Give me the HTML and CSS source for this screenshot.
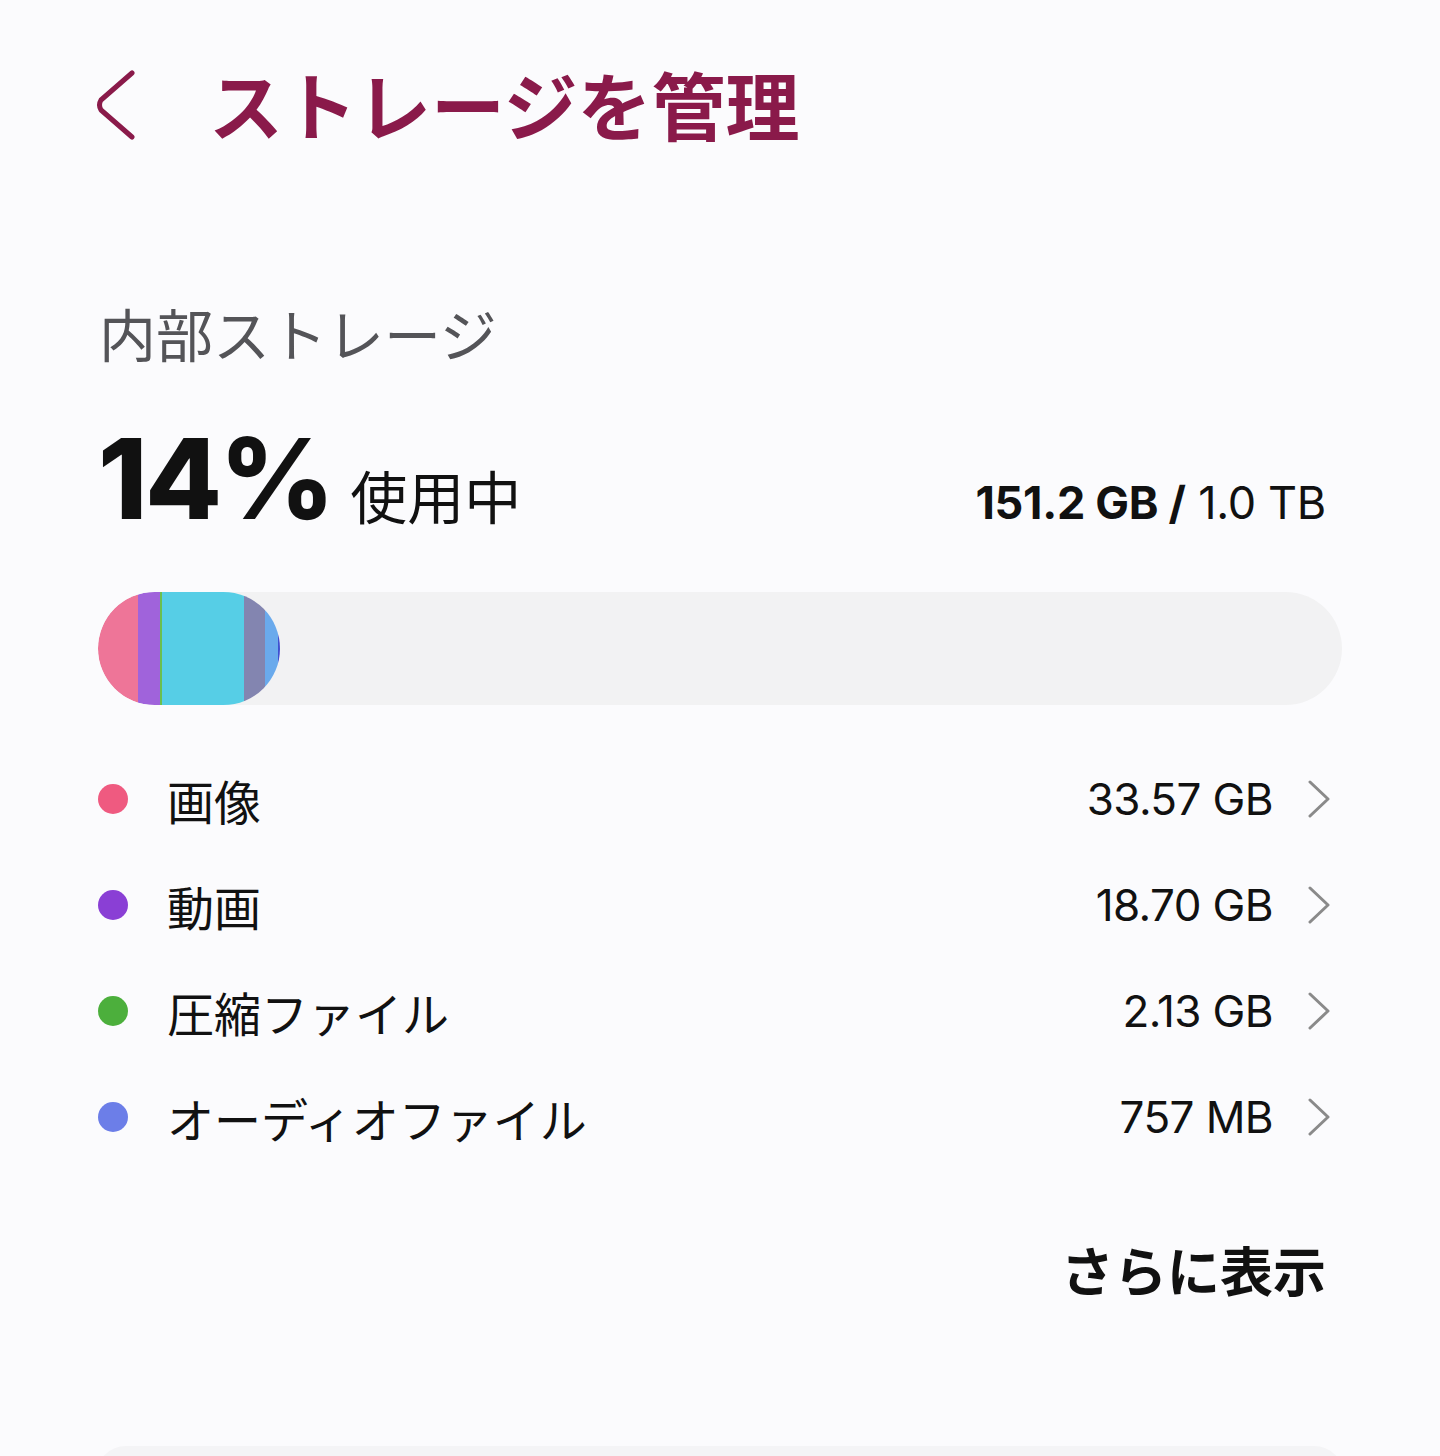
FILE: index.html
```html
<!DOCTYPE html>
<html lang="ja">
<head>
<meta charset="utf-8">
<link rel="stylesheet" href="styles.css">
</head>
<body>
<div class="page">
  <header class="header">
    <svg class="back" width="40" height="70" viewBox="0 0 40 70"><path d="M36 3 L5 30 Q2 35 5 40 L36 67" fill="none" stroke="#8a1a4a" stroke-width="5" stroke-linecap="round" stroke-linejoin="round"/></svg>
    <h1 class="title">ストレージを管理</h1>
  </header>

  <section class="storage">
    <div class="section-label">内部ストレージ</div>
    <div class="usage">
      <div class="usage-left"><span class="pct">14%</span><span class="in-use">使用中</span></div>
      <div class="usage-right"><b>151.2 GB /</b> 1.0 TB</div>
    </div>
    <div class="bar">
      <div class="bar-fill">
        <span class="seg" style="width:40px;background:#ee7598"></span>
        <span class="seg" style="width:22px;background:#a063db"></span>
        <span class="seg" style="width:2px;background:#6bbf4e"></span>
        <span class="seg" style="width:82px;background:#56cee6"></span>
        <span class="seg" style="width:21px;background:#8385b0"></span>
        <span class="seg" style="width:13px;background:#6aaaec"></span>
        <span class="seg" style="width:2px;background:#4050d0"></span>
      </div>
    </div>

    <ul class="list">
      <li class="row"><span class="dot pink"></span><span class="label">画像</span><span class="value">33.57 GB</span><svg class="chev" width="22" height="38" viewBox="0 0 22 38"><path d="M2 2 L20 19 L2 36" fill="none" stroke="#8a8a8a" stroke-width="3" stroke-linecap="round" stroke-linejoin="round"/></svg></li>
      <li class="row"><span class="dot purple"></span><span class="label">動画</span><span class="value">18.70 GB</span><svg class="chev" width="22" height="38" viewBox="0 0 22 38"><path d="M2 2 L20 19 L2 36" fill="none" stroke="#8a8a8a" stroke-width="3" stroke-linecap="round" stroke-linejoin="round"/></svg></li>
      <li class="row"><span class="dot green"></span><span class="label">圧縮ファイル</span><span class="value">2.13 GB</span><svg class="chev" width="22" height="38" viewBox="0 0 22 38"><path d="M2 2 L20 19 L2 36" fill="none" stroke="#8a8a8a" stroke-width="3" stroke-linecap="round" stroke-linejoin="round"/></svg></li>
      <li class="row"><span class="dot blue"></span><span class="label">オーディオファイル</span><span class="value">757 MB</span><svg class="chev" width="22" height="38" viewBox="0 0 22 38"><path d="M2 2 L20 19 L2 36" fill="none" stroke="#8a8a8a" stroke-width="3" stroke-linecap="round" stroke-linejoin="round"/></svg></li>
    </ul>

    <div class="more-wrap"><span class="more">さらに表示</span></div>
  </section>

  <div class="card"></div>
</div>
</body>
</html>
```

FILE: styles.css
```css
* { box-sizing: border-box; }
html, body { margin: 0; padding: 0; }
body {
  position: relative;
  background: #fbfbfd;
  font-family: Inter, "Noto Sans CJK JP", sans-serif;
  color: #111;
  width: 1440px;
  height: 1456px;
  overflow: hidden;
}
.page { padding: 0 98px; }
.header {
  display: flex;
  align-items: flex-start;
  height: 214px;
  padding-top: 70px;
}
.back { margin-left: -2px; flex: none; }
.title {
  margin: -4px 0 0 73px;
  font-family: "Noto Sans CJK JP", sans-serif;
  font-weight: 700;
  font-size: 74px;
  color: #8a1a4a;
  line-height: 1;
}

.section-label {
  font-family: "Noto Sans CJK JP", sans-serif;
  font-size: 57px;
  color: #545458;
  line-height: 1;
  margin-top: 90px;
  margin-left: 1px;
}
.usage {
  display: flex;
  justify-content: space-between;
  align-items: baseline;
  margin-top: 61px;
  padding-right: 16px;
}
.usage-left { display: flex; align-items: baseline; }
.pct {
  font-family: Inter, sans-serif;
  font-weight: 800;
  font-size: 112px;
  letter-spacing: -2.5px;
  line-height: 1;
}
.in-use {
  font-family: "Noto Sans CJK JP", sans-serif;
  font-size: 57px;
  margin-left: 18px;
  line-height: 1;
}
.usage-right {
  font-family: Inter, sans-serif;
  font-size: 45px;
  line-height: 1;
  letter-spacing: -0.3px;
}
.usage-right b { font-weight: 700; }

.bar {
  margin-top: 58px;
  height: 113px;
  border-radius: 57px;
  background: #f2f2f3;
  overflow: hidden;
}
.bar-fill {
  display: flex;
  height: 100%;
  width: 182px;
  border-radius: 57px;
  overflow: hidden;
}
.seg { display: block; height: 100%; flex: none; }

.list { list-style: none; margin: 41px 0 0; padding: 0; }
.row {
  display: flex;
  align-items: center;
  height: 106px;
}
.dot { width: 30px; height: 30px; border-radius: 50%; flex: none; }
.pink { background: #ef5a80; }
.purple { background: #8a3fd5; }
.green { background: #4caf3c; }
.blue { background: #6c7ee8; }
.label {
  font-family: "Noto Sans CJK JP", sans-serif;
  font-size: 47px;
  margin-left: 39px;
  flex: 1;
  color: #111;
}
.value {
  font-family: Inter, sans-serif;
  font-size: 44px;
  letter-spacing: -0.6px;
  color: #111;
}
.chev { margin-left: 35px; margin-right: 12px; flex: none; }

.more-wrap { display: flex; justify-content: flex-end; margin-top: 61px; padding-right: 16px; }
.more {
  font-family: "Noto Sans CJK JP", sans-serif;
  font-weight: 700;
  font-size: 53px;
  color: #111;
}
.card {
  position: absolute;
  left: 96px;
  right: 96px;
  top: 1446px;
  height: 60px;
  background: #f4f4f6;
  border-radius: 32px;
}
```
